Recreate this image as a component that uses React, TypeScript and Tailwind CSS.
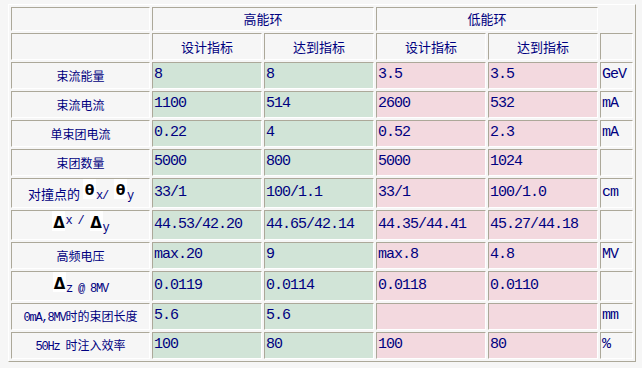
const cell =
  "border border-solid border-t-[#aca899] border-l-[#aca899] border-r-white border-b-white p-0 align-middle";
const mono = "font-['Liberation_Mono',monospace]";
const cjk = "font-['Noto_Sans_CJK_SC',sans-serif]";

type Row = {
  label: React.ReactNode;
  h: string;
  hi: [string, string];
  lo: [string, string];
  unit: string;
};

function Theta() {
  return (
    <span className="inline-block overflow-hidden w-[13px] h-[20px] bg-white text-black font-['DejaVu_Sans',sans-serif] font-bold text-[14px] leading-[22px] text-center align-baseline">
      θ
    </span>
  );
}

function Delta() {
  return (
    <span className="inline-block overflow-hidden w-[13px] h-[20px] bg-white text-black font-['DejaVu_Sans',sans-serif] font-bold text-[15px] leading-[24px] text-center align-baseline">
      Δ
    </span>
  );
}

function Asc({ children }: { children: React.ReactNode }) {
  return <span className={`${mono} text-[12px] tracking-[-1.2px]`}>{children}</span>;
}

const rows: Row[] = [
  { label: "束流能量", h: "h-[27px]", hi: ["8", "8"], lo: ["3.5", "3.5"], unit: "GeV" },
  { label: "束流电流", h: "h-[27px]", hi: ["1100", "514"], lo: ["2600", "532"], unit: "mA" },
  { label: "单束团电流", h: "h-[27px]", hi: ["0.22", "4"], lo: ["0.52", "2.3"], unit: "mA" },
  { label: "束团数量", h: "h-[27px]", hi: ["5000", "800"], lo: ["5000", "1024"], unit: "" },
  {
    label: (
      <span className="leading-[22px]">
        <span className="text-[13px] mr-[3px]">对撞点的</span>
        <Theta />
        <Asc>x/ </Asc>
        <Theta />
        <Asc>y</Asc>
      </span>
    ),
    h: "h-[29px]",
    hi: ["33/1", "100/1.1"],
    lo: ["33/1", "100/1.0"],
    unit: "cm",
  },
  {
    label: (
      <span className="leading-[22px]">
        <Delta />
        <span className="relative -top-[7px]">
          <Asc>x / </Asc>
        </span>
        <Delta />
        <Asc>y</Asc>
      </span>
    ),
    h: "h-[29px]",
    hi: ["44.53/42.20", "44.65/42.14"],
    lo: ["44.35/44.41", "45.27/44.18"],
    unit: "",
  },
  { label: "高频电压", h: "h-[27px]", hi: ["max.20", "9"], lo: ["max.8", "4.8"], unit: "MV" },
  {
    label: (
      <span className="leading-[22px]">
        <Delta />
        <Asc>z @ 8MV</Asc>
      </span>
    ),
    h: "h-[29px]",
    hi: ["0.0119", "0.0114"],
    lo: ["0.0118", "0.0110"],
    unit: "",
  },
  {
    label: (
      <>
        <Asc>0mA,8MV</Asc>时的束团长度
      </>
    ),
    h: "h-[27px]",
    hi: ["5.6", "5.6"],
    lo: ["", ""],
    unit: "mm",
  },
  {
    label: (
      <>
        <Asc>50Hz </Asc>时注入效率
      </>
    ),
    h: "h-[27px]",
    hi: ["100", "80"],
    lo: ["100", "80"],
    unit: "%",
  },
];

export default function App() {
  return (
    <div className="min-h-screen bg-[#f6f6f6] pl-[8px] pt-[4px] text-[#000080]">
      <table className="border-separate border-spacing-[2px] border border-solid border-t-white border-l-white border-r-[#aca899] border-b-[#aca899] table-fixed w-[628px]">
        <colgroup>
          <col className="w-[139px]" />
          <col className="w-[110px]" />
          <col className="w-[110px]" />
          <col className="w-[110px]" />
          <col className="w-[110px]" />
          <col className="w-[33px]" />
        </colgroup>
        <tbody className={`${cjk} text-[13px]`}>
          <tr>
            <td className={`${cell} h-[24px]`}></td>
            <td colSpan={2} className={`${cell} h-[24px] text-center`}>
              高能环
            </td>
            <td colSpan={2} className={`${cell} h-[24px] text-center`}>
              低能环
            </td>
          </tr>
          <tr>
            <td className={`${cell} h-[27px]`}></td>
            <td className={`${cell} h-[27px] text-center`}>设计指标</td>
            <td className={`${cell} h-[27px] text-center`}>达到指标</td>
            <td className={`${cell} h-[27px] text-center`}>设计指标</td>
            <td className={`${cell} h-[27px] text-center`}>达到指标</td>
            <td className={`${cell} h-[27px]`}></td>
          </tr>
          {rows.map((r, i) => (
            <tr key={i}>
              <td className={`${cell} ${r.h} text-center text-[12px] whitespace-pre`}>{r.label}</td>
              {r.hi.map((v, j) => (
                <td
                  key={"h" + j}
                  className={`${cell} ${r.h} bg-[#d1e4d7] px-[1px] ${mono} text-[15px] tracking-[-1px]`}
                >
                  {v}
                </td>
              ))}
              {r.lo.map((v, j) => (
                <td
                  key={"l" + j}
                  className={`${cell} ${r.h} bg-[#f3d9df] px-[1px] ${mono} text-[15px] tracking-[-1px]`}
                >
                  {v}
                </td>
              ))}
              <td className={`${cell} ${r.h} px-[1px] ${mono} text-[15px] tracking-[-1px]`}>{r.unit}</td>
            </tr>
          ))}
        </tbody>
      </table>
    </div>
  );
}
